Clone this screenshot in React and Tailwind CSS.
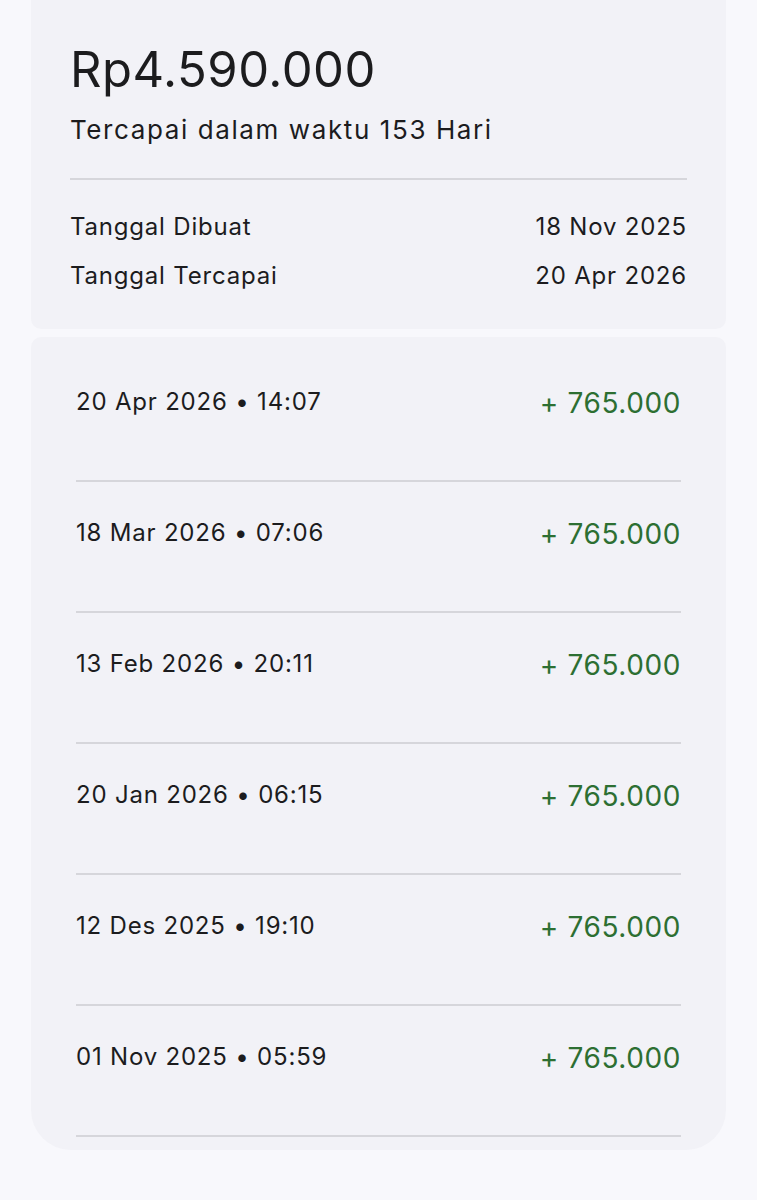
const rows = [
  { date: '20 Apr 2026', time: '14:07', amount: '765.000' },
  { date: '18 Mar 2026', time: '07:06', amount: '765.000' },
  { date: '13 Feb 2026', time: '20:11', amount: '765.000' },
  { date: '20 Jan 2026', time: '06:15', amount: '765.000' },
  { date: '12 Des 2025', time: '19:10', amount: '765.000' },
  { date: '01 Nov 2025', time: '05:59', amount: '765.000' },
];

export default function App() {
  return (
    <div className="min-h-[1200px] bg-[#f8f8fc] px-[31px] font-['Inter',sans-serif] text-[#1c1c1e]">
      {/* Summary card */}
      <div className="bg-[#f2f2f7] rounded-b-[10px] px-[39px] pt-[41px] pb-[38px]">
        <h1 className="text-[49px] leading-[58px] tracking-[0.5px]">Rp4.590.000</h1>
        <p className="text-[26px] leading-[30px] mt-[16px] tracking-[1.6px]">Tercapai dalam waktu 153 Hari</p>
        <div className="h-[2px] bg-[#d6d6db] mt-[33px]" />
        <div className="flex flex-col gap-[19px] mt-[32px] text-[24px] leading-[30px] tracking-[0.8px]">
          <div className="flex justify-between">
            <span>Tanggal Dibuat</span>
            <span>18 Nov 2025</span>
          </div>
          <div className="flex justify-between">
            <span>Tanggal Tercapai</span>
            <span>20 Apr 2026</span>
          </div>
        </div>
      </div>

      {/* History card */}
      <div className="mt-[8px] bg-[#f2f2f7] rounded-t-[10px] rounded-b-[40px] px-[45px] pt-[14px] pb-[13px]">
        {rows.map((r) => (
          <div key={r.date} className="h-[131px] border-b-2 border-[#d6d6db] flex justify-between items-start pt-[36px]">
            <span className="text-[24px] leading-[30px] tracking-[0.8px]">
              {r.date} • {r.time}
            </span>
            <span className="text-[28px] leading-[32px] text-[#2d6f32] tracking-[0.6px]">+ {r.amount}</span>
          </div>
        ))}
      </div>
    </div>
  );
}
